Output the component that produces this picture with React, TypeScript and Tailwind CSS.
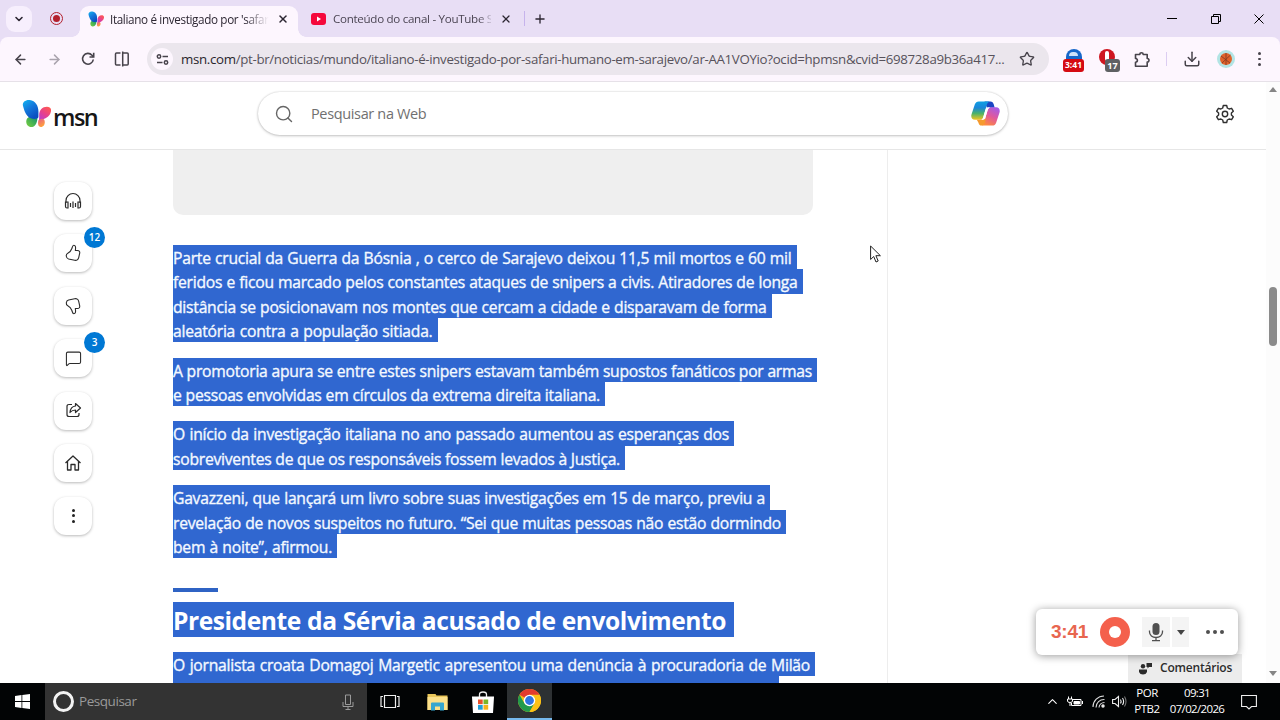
import type { ReactNode } from "react";
import {
  ArrowLeft,
  ArrowRight,
  ChevronDown,
  ChevronUp,
  Download,
  House,
  MessageSquare,
  Plus,
  Search,
  Star,
  X,
} from "lucide-react";

interface Line {
  text: string;
  width: string;
}

const paragraphs: Line[][] = [
  [
    { text: "Parte crucial da Guerra da Bósnia , o cerco de Sarajevo deixou 11,5 mil mortos e 60 mil", width: "w-[618.5px]" },
    { text: "feridos e ficou marcado pelos constantes ataques de snipers a civis. Atiradores de longa", width: "w-[624.5px]" },
    { text: "distância se posicionavam nos montes que cercam a cidade e disparavam de forma", width: "w-[593.5px]" },
    { text: "aleatória contra a população sitiada.", width: "w-[259.5px]" },
  ],
  [
    { text: "A promotoria apura se entre estes snipers estavam também supostos fanáticos por armas", width: "w-[639px]" },
    { text: "e pessoas envolvidas em círculos da extrema direita italiana.", width: "w-[427px]" },
  ],
  [
    { text: "O início da investigação italiana no ano passado aumentou as esperanças dos", width: "w-[556px]" },
    { text: "sobreviventes de que os responsáveis fossem levados à Justiça.", width: "w-[447px]" },
  ],
  [
    { text: "Gavazzeni, que lançará um livro sobre suas investigações em 15 de março, previu a", width: "w-[592px]" },
    { text: "revelação de novos suspeitos no futuro. “Sei que muitas pessoas não estão dormindo", width: "w-[608px]" },
    { text: "bem à noite”, afirmou.", width: "w-[159px]" },
  ],
];

function TextLine({ text, width }: Line) {
  return (
    <div className="flex h-[24.35px]">
      <span className="h-full bg-[#3067d0] pr-[5px]">
        <span
          className={`block leading-[26.5px] tracking-[-0.25px] whitespace-nowrap [-webkit-text-stroke:0.35px_#f4f9ff] [text-align-last:justify] ${width}`}
        >
          {text}
        </span>
      </span>
    </div>
  );
}

function Butterfly({ className, id }: { className: string; id: string }) {
  return (
    <svg className={className} viewBox="0 0 30 30">
      <defs>
        <linearGradient id={`${id}a`} x1="0" y1="0" x2="0.6" y2="1">
          <stop offset="0" stopColor="#12b5f0" />
          <stop offset="0.5" stopColor="#1478dc" />
          <stop offset="1" stopColor="#0b4fc0" />
        </linearGradient>
        <linearGradient id={`${id}b`} x1="0.8" y1="0" x2="0.2" y2="1">
          <stop offset="0" stopColor="#ff5a50" />
          <stop offset="0.45" stopColor="#e8418a" />
          <stop offset="1" stopColor="#b23ae0" />
        </linearGradient>
        <linearGradient id={`${id}c`} x1="0" y1="1" x2="1" y2="0">
          <stop offset="0" stopColor="#7bd13c" />
          <stop offset="1" stopColor="#0d8f70" />
        </linearGradient>
        <linearGradient id={`${id}d`} x1="0" y1="0" x2="0.5" y2="1">
          <stop offset="0" stopColor="#e85a8a" />
          <stop offset="1" stopColor="#ffa33a" />
        </linearGradient>
      </defs>
      <path d="M16 18c-3-.8-8-1-10.500 2-2.500 3.500-.5 8.500 3 9 5 .4 7.500-4 7.500-11z" fill={`url(#${id}c)`} />
      <path d="M1 7C0 3 4 .5 8 1c6 .8 9 6 9 12v6c-1 2-5 2-8 1C4 18 2 11 1 7z" fill={`url(#${id}a)`} />
      <path d="M17.800 18c-.5-6 3-10 8-10 3.500 0 5 2.500 4 5.500-1 4-4.500 6.500-8 7.500L17.500 25z" fill={`url(#${id}b)`} />
      <path d="M17 22c2.500-2 6-2.500 6.500 1 .5 3.500-1.500 6-4 6-3 0-3.300-4-2.500-7z" fill={`url(#${id}d)`} />
    </svg>
  );
}

function CopilotLogo() {
  return (
    <svg className="size-[29px]" viewBox="0 0 30 28">
      <defs>
        <linearGradient id="cpa" x1="0" y1="0" x2="0" y2="1">
          <stop offset="0" stopColor="#0ea0e4" />
          <stop offset="0.35" stopColor="#1c86d8" />
          <stop offset="0.65" stopColor="#49b26a" />
          <stop offset="1" stopColor="#f2c51d" />
        </linearGradient>
        <linearGradient id="cpb" x1="0.8" y1="0" x2="0.3" y2="1">
          <stop offset="0" stopColor="#a45bea" />
          <stop offset="0.5" stopColor="#e0589c" />
          <stop offset="1" stopColor="#ff8a3c" />
        </linearGradient>
      </defs>
      <path d="M14 1.500h6c2 0 3 1.200 3.500 3l1 3.500h-8z" fill="#1b46c4" />
      <path d="M8 1.500h11c-2 1-2.500 3-3.200 5.500L13 17c-.8 2.500-1.500 3.500-4 3.500H4c-3 0-4.300-2.500-3.500-5.500L4 4.500C4.700 2.500 6 1.500 8 1.500z" fill="url(#cpa)" />
      <path d="M22 26.500H11c2-1 2.500-3 3.200-5.500L17 11c.8-2.500 1.500-3.500 4-3.500h5c3 0 4.300 2.500 3.500 5.500l-3.500 10.500c-.7 2-2 3-4 3z" fill="url(#cpb)" />
      <path d="M6 20.500h4c1.500 0 2-.8 2.800-2l2.400 2c-.8 4-1.800 6-4.200 6-2 0-3-1.500-3.500-3.500z" fill="#f59a2e" />
      <path d="M17.700 7.500h2.300c-2 .8-2.600 2.500-3.300 5l-1.700 5.500c-.6 2-1.500 2.700-3.200 2.700h-1.300c1.300-.5 1.800-2 2.300-3.700l2-6.500c.6-2 1.400-3 2.900-3z" fill="#fff" />
    </svg>
  );
}

function SideButton({ children, badge }: { children: ReactNode; badge?: string }) {
  return (
    <div className="relative flex size-[38px] items-center justify-center rounded-[12px] bg-white text-[#2b2b2b] shadow-[0_1px_3px_rgba(0,0,0,0.28)]">
      {children}
      {badge && (
        <span className="absolute -top-[7.500px] left-[30px] flex size-[21px] items-center justify-center rounded-full bg-[#0078d4] text-[10px] font-semibold text-white">
          {badge}
        </span>
      )}
    </div>
  );
}

function ThumbIcon({ className = "" }: { className?: string }) {
  return (
    <svg className={`size-[18px] ${className}`} viewBox="0 0 18 18" fill="none" stroke="currentColor" strokeWidth="1.100" strokeLinejoin="round">
      <path d="M9.800 1.300c1.800 0 2.100 2 1.500 5.200h2.200c1.700 0 2.500 1.200 2.200 2.700l-1 4.500c-.4 2-2 3-4 2.600L4.600 15C3 14.600 2.500 13.800 2.300 12.300c-.2-1.600.2-2.500 1.500-3.100 2.200-1 3.200-2.300 4.100-4.700.5-1.400.6-3.200 1.900-3.200z" />
    </svg>
  );
}

function TitleBar() {
  return (
    <div className="flex h-[37px] bg-[#e8def5] text-[#2c2632]">
      <div className="flex w-[80px] items-center">
        <div className="ml-[6px] flex h-[26px] w-[26px] items-center justify-center rounded-[9px] bg-[#f7effd]">
          <ChevronDown size={12} strokeWidth={3.200} />
        </div>
        <div className="ml-[18px] flex size-[13px] items-center justify-center rounded-full border-[1.500px] border-[#b3202d]">
          <span className="size-[7px] rounded-full bg-[#b3202d]" />
        </div>
      </div>
      <div className="relative mt-[6px] flex h-[31px] w-[218px] items-center rounded-t-[9px] bg-[#fdf6fe] pb-[5px] pl-[8px] before:absolute before:bottom-0 before:-left-[8px] before:size-[8px] before:bg-[radial-gradient(circle_at_0_0,transparent_7.5px,#fdf6fe_8px)] after:absolute after:-right-[8px] after:bottom-0 after:size-[8px] after:bg-[radial-gradient(circle_at_100%_0,transparent_7.5px,#fdf6fe_8px)]">
        <Butterfly id="tab" className="size-[16px] shrink-0" />
        <span className="mt-px ml-[6px] w-[162px] text-[11.700px] tracking-[-0.350px] whitespace-nowrap [mask-image:linear-gradient(to_right,black_83%,transparent_98%)]">
          Italiano é investigado por 'safari
        </span>
        <X size={12} strokeWidth={3} className="ml-[5px] shrink-0" />
      </div>
      <div className="flex flex-1 items-center">
        <svg className="ml-[13px] h-[12px] w-[15px]" viewBox="0 0 15 12">
          <rect width="15" height="12" rx="3" fill="#f5093c" />
          <path d="M6 3.500v5L10 6z" fill="#fff" />
        </svg>
        <span className="mt-px ml-[7px] w-[158px] text-[11.600px] tracking-[-0.300px] whitespace-nowrap text-[#4b4553] [mask-image:linear-gradient(to_right,black_92%,transparent_102%)]">
          Conteúdo do canal - YouTube S
        </span>
        <X size={12} strokeWidth={2.500} className="ml-[9px]" />
        <span className="ml-[12px] h-[15px] w-px bg-[#c6b3ec]" />
        <Plus size={14} strokeWidth={2.300} className="ml-[8px]" />
        <div className="mr-[16px] ml-auto flex items-center gap-[33px]">
          <span className="mr-px h-px w-[10px] bg-black" />
          <svg className="size-[10px]" viewBox="0 0 10 10" fill="none" stroke="#000">
            <path d="M.5 2.500h7v7h-7zM2.500 2.500v-2h7v7h-2" />
          </svg>
          <svg className="size-[10px]" viewBox="0 0 10 10" stroke="#000">
            <path d="M.5.5l9 9M9.500.5l-9 9" />
          </svg>
        </div>
      </div>
    </div>
  );
}

function Toolbar() {
  return (
    <div className="bg-[#e8def5]">
      <div className="flex h-[45px] items-center rounded-t-[8px] border-b border-[#e6e1e8] bg-[#fdf6fe] text-[#47434b]">
        <ArrowLeft size={15} className="ml-[13px]" strokeWidth={2.400} />
        <ArrowRight size={15} className="ml-[19px] text-[#aaa4ae]" strokeWidth={2.400} />
        <svg className="ml-[19px] size-[14px]" viewBox="0 0 14 14" fill="none" stroke="currentColor" strokeWidth="1.600">
          <path d="M12.300 7.500A5.400 5.400 0 1 1 11 3.200L12.500 5" />
          <path d="M12.700.8v4.200H8.500" />
        </svg>
        <svg className="ml-[19px] size-[16px]" viewBox="0 0 16 16" fill="none" stroke="currentColor" strokeWidth="1.500">
          <path d="M6.500 2H2.500Q1.500 2 1.500 3v10q0 1 1 1h4M8.700.5v15M8.700 2h4.500q1 0 1 1v10q0 1-1 1H8.700" />
        </svg>
        <div className="ml-[17px] flex h-[32px] w-[902px] items-center rounded-full bg-[#ebe6ed]">
          <span className="ml-[4px] flex size-[22px] shrink-0 items-center justify-center rounded-full bg-[#fdf6fe]">
            <svg className="size-[13px]" viewBox="0 0 13 13" fill="none" stroke="currentColor" strokeWidth="1.500">
              <circle cx="3" cy="3.500" r="1.700" />
              <path d="M6.500 3.500h5.500M1 9.500h5.500" />
              <circle cx="10" cy="9.500" r="1.700" />
            </svg>
          </span>
          <span className="mt-[2px] ml-[8px] w-[824px] shrink-0 text-[13.300px] tracking-[-0.330px] whitespace-nowrap text-[#57525b]">
            <span className="text-[#29252c]">msn.com</span>/pt-br/noticias/mundo/italiano-é-investigado-por-safari-humano-em-sarajevo/ar-AA1VOYio?ocid=hpmsn&amp;cvid=698728a9b36a417...
          </span>
          <Star size={16} className="ml-[14px]" />
        </div>
        <div className="relative ml-[14px] h-[22px] w-[21px]">
          <div className="mx-auto mt-[1px] flex h-[14px] w-[16px] justify-center rounded-t-full bg-[#1767c9] pt-[3px]">
            <span className="h-[4px] w-[9px] rounded-t-full bg-[#cfe3f8]" />
          </div>
          <span className="absolute top-[11px] left-0 flex h-[13px] w-[21px] items-center justify-center rounded-[3px] bg-[#d50b12] text-[8.500px] font-bold text-white">
            3:41
          </span>
        </div>
        <div className="relative ml-[15px] h-[22px] w-[21px]">
          <div className="mt-px flex size-[16px] items-center justify-center rounded-full bg-[#cf1620]">
            <span className="h-[10px] w-[4px] -translate-y-px rounded-full bg-white" />
          </div>
          <span className="absolute top-[11px] left-[6px] flex h-[13px] w-[15px] items-center justify-center rounded-[3px] bg-[#5e6063] text-[9px] font-bold text-white">
            17
          </span>
        </div>
        <svg className="ml-[14px] size-[17px]" viewBox="0 0 17 17" fill="none" stroke="currentColor" strokeWidth="1.600" strokeLinejoin="round">
          <path d="M1.500 3.500h4.300a1.700 1.700 0 0 1 3.400 0h4v4a1.700 1.700 0 0 1 0 3.600v4.100H1.500v-4a1.900 1.900 0 0 0 0-3.800z" />
        </svg>
        <span className="ml-[15px] h-[14px] w-px bg-[#dccdf2]" />
        <Download size={18} className="ml-[16px]" />
        <svg className="ml-[16px] size-[18px]" viewBox="0 0 18 18">
          <circle cx="9" cy="9" r="9" fill="#b2e4e4" />
          <circle cx="9" cy="9" r="6" fill="#e0622b" />
          <path d="M4 6l9 7M13.500 5L5 13M9 3v12" stroke="#873d25" strokeWidth=".9" />
        </svg>
        <span className="ml-[23px] flex flex-col gap-[3px]">
          <i className="size-[2.500px] rounded-full bg-[#47434b]" />
          <i className="size-[2.500px] rounded-full bg-[#47434b]" />
          <i className="size-[2.500px] rounded-full bg-[#47434b]" />
        </span>
      </div>
    </div>
  );
}

function MsnHeader() {
  return (
    <div className="flex h-[68px] w-[1266px] shrink-0 items-center border-b border-[#e6e6e6] bg-white pb-[4px]">
      <Butterfly id="msn" className="mb-[1px] ml-[22px] size-[29px]" />
      <span className="mt-[8px] ml-[2px] w-[44px] text-[23.500px] leading-none font-semibold tracking-[-1.500px] text-[#161616]">msn</span>
      <div className="ml-[161px] flex h-[43px] w-[750px] items-center rounded-full bg-white pr-[8px] pl-[16px] shadow-[0_0_2px_rgba(0,0,0,0.18),0_1px_3px_rgba(0,0,0,0.2)]">
        <Search size={20} strokeWidth={1.700} className="text-[#666]" />
        <span className="ml-[17px] text-[14.500px] tracking-[-0.350px] text-[#707070]">Pesquisar na Web</span>
        <span className="ml-auto">
          <CopilotLogo />
        </span>
      </div>
      <svg className="ml-[207px] size-[20px]" viewBox="0 0 20 20" fill="none" stroke="#303030" strokeWidth="1.400" strokeLinejoin="round">
        <path d="M8.300 1.500h3.400l.6 2.500 1.800 1 2.500-.7 1.700 2.900-1.900 1.800v2l1.900 1.800-1.700 2.900-2.500-.7-1.800 1-.6 2.500H8.300L7.700 16l-1.800-1-2.500.7-1.700-2.900L3.600 11V9L1.700 7.200l1.700-2.900 2.500.7 1.800-1z" />
        <circle cx="10" cy="10" r="2.700" />
      </svg>
    </div>
  );
}

function Article() {
  return (
    <div className="ml-[80px] w-[715px] shrink-0 border-r border-[#ededed]">
      <div className="h-[64.500px] w-[640px] rounded-b-[10px] bg-[#efefef]" />
      <div className="mt-[30.500px] flex flex-col gap-[15.200px] text-[15.700px] font-medium text-[#f4f9ff]">
        {paragraphs.map((lines, i) => (
          <div key={i}>
            {lines.map((line) => (
              <TextLine key={line.text} {...line} />
            ))}
          </div>
        ))}
      </div>
      <div className="mt-[29.500px] h-[4px] w-[45px] bg-[#2f63c4]" />
      <div className="mt-[10px] flex h-[35px]">
        <span className="bg-[#3067d0] pr-[8px]">
          <h2 className="w-[553px] text-[24.600px] leading-[37px] font-bold tracking-[-0.450px] whitespace-nowrap text-white [text-align-last:justify]">
            Presidente da Sérvia acusado de envolvimento
          </h2>
        </span>
      </div>
      <div className="mt-[15px] text-[15.700px] font-medium text-[#f4f9ff]">
        <TextLine text="O jornalista croata Domagoj Margetic apresentou uma denúncia à procuradoria de Milão" width="w-[637px]" />
        <div className="h-[10px] w-[606px] bg-[#3067d0]" />
      </div>
    </div>
  );
}

function RecorderPanel() {
  return (
    <div className="absolute top-[609px] left-[1036px] flex h-[46px] w-[202px] items-center rounded-[6px] bg-white shadow-[0_1px_8px_rgba(0,0,0,0.4)]">
      <span className="ml-[15px] w-[38px] font-['Liberation_Sans'] text-[19px] font-bold tracking-[-0.200px] text-[#e8664f]">3:41</span>
      <span className="ml-[11px] flex size-[30px] items-center justify-center rounded-full bg-[#f4604c]">
        <i className="size-[12px] rounded-full bg-white" />
      </span>
      <span className="ml-[12px] flex h-[30px] w-[28px] items-center justify-center bg-[#f4f4f4]">
        <svg className="h-[20px] w-[16px]" viewBox="0 0 16 20">
          <rect x="4.500" y="1" width="7" height="12" rx="3.500" fill="#505050" />
          <path d="M1.500 8.500v1.500a6.500 5.500 0 0 0 13 0V8.500M8 15.500v3M4 18.700h8" fill="none" stroke="#505050" strokeWidth="1.300" />
        </svg>
      </span>
      <span className="ml-[2px] flex h-[30px] w-[17px] items-center justify-center bg-[#f4f4f4]">
        <svg className="h-[5px] w-[8px]" viewBox="0 0 8 5">
          <path d="M0 0h8L4 5z" fill="#444" />
        </svg>
      </span>
      <span className="ml-[17px] flex gap-[3px]">
        <i className="size-[4px] rounded-full bg-[#505050]" />
        <i className="size-[4px] rounded-full bg-[#505050]" />
        <i className="size-[4px] rounded-full bg-[#505050]" />
      </span>
    </div>
  );
}

function ChromeLogo() {
  return (
    <svg className="size-[23px]" viewBox="0 0 24 24">
      <circle cx="12" cy="12" r="12" fill="#fbc116" />
      <path d="M12 12L1.600 6A12 12 0 0 1 22.400 6z" fill="#e33b2e" />
      <path d="M1.600 6A12 12 0 0 0 12 24l5.200-9L12 12 6.800 15z" fill="#229a4b" />
      <path d="M12 6h10.400A12 12 0 0 1 12 24l5.200-9z" fill="#fbc116" />
      <circle cx="12" cy="12" r="6" fill="#fff" />
      <circle cx="12" cy="12" r="4.600" fill="#2f74e0" />
    </svg>
  );
}

function Taskbar() {
  return (
    <div className="flex h-[37px] shrink-0 bg-[#020405] text-white">
      <div className="flex w-[45px] items-center justify-center">
        <svg className="size-[15px]" viewBox="0 0 15 15" fill="#fff">
          <path d="M0 2l6.500-.9v6H0zM7.300 1L15 0v7.100H7.300zM0 7.900h6.500v6L0 13zM7.300 7.900H15V15l-7.700-1z" />
        </svg>
      </div>
      <div className="flex w-[322px] items-center bg-[#333]">
        <span className="ml-[8px] size-[21px] rounded-full border-[3px] border-[#f3f3f3]" />
        <span className="ml-[5px] text-[13.500px] tracking-[-0.450px] text-[#9a9a9a]">Pesquisar</span>
        <svg className="mr-[13px] ml-auto h-[16px] w-[12px]" viewBox="0 0 12 16" fill="none" stroke="#9a9a9a">
          <path d="M3.500 1h5v9.500h-5zM1 8v4.500h10V8M6 12.500v3M3.500 15.500h5" />
        </svg>
      </div>
      <div className="flex w-[46px] items-center justify-center">
        <svg className="h-[15px] w-[20px]" viewBox="0 0 20 15" fill="none" stroke="#eee" strokeWidth="1.200">
          <path d="M4.500 1.500h11v12h-11zM3 2.500H1v10h2M17 2.500h2v10h-2" />
        </svg>
      </div>
      <div className="flex w-[48px] items-center justify-center">
        <svg className="h-[18px] w-[21px]" viewBox="0 0 21 18">
          <path d="M.5 1h8l1 1.500h11V17H.5z" fill="#e9c659" />
          <path d="M.5 4h20v13H.5z" fill="#fbe08a" />
          <path d="M4 17.500v-7q0-1 1-1h11q1 0 1 1v7h-4v-4H8v4z" fill="#35a6d0" />
        </svg>
      </div>
      <div className="flex w-[46px] items-center pl-[11px]">
        <svg className="h-[22px] w-[22px]" viewBox="0 0 22 22">
          <path d="M7.500 6V3.500Q7.500 1 11 1t3.500 2.500V6" fill="none" stroke="#eee" strokeWidth="1.300" />
          <path d="M0 5.500h22L21 22H1z" fill="#fff" />
          <path d="M6 8.500h4.700v4.700H6z" fill="#e8502a" />
          <path d="M11.500 8.500h4.700v4.700h-4.700z" fill="#79b528" />
          <path d="M6 14h4.700v4.700H6z" fill="#1f9ed8" />
          <path d="M11.500 14h4.700v4.700h-4.700z" fill="#f6b31c" />
        </svg>
      </div>
      <div className="flex w-[45px] items-center justify-center border-b-2 border-[#76b9ed] bg-[#2d3133]">
        <ChromeLogo />
      </div>
      <div className="ml-auto flex items-center">
        <ChevronUp size={15} strokeWidth={1.700} />
        <svg className="ml-[7px] h-[12px] w-[16px]" viewBox="0 0 16 12" fill="none" stroke="#fff">
          <path d="M5.500 3.500H14v6H4.500V7M15.500 5v3M1.500.5V3M4.500.5V3M.5 3h5v2q0 1.500-2.500 1.500T.5 5zM3 6.500V10" />
          <path d="M7 5.500h5.500v2.500H7z" fill="#fff" />
        </svg>
        <svg className="ml-[9px] size-[13px]" viewBox="0 0 13 13" fill="none" stroke="#ddd" strokeWidth="1.100">
          <path d="M1 12A11 11 0 0 1 12 1M4 12.500A8 8 0 0 1 12.500 4.500M7 12.500a5.500 5.500 0 0 1 5.500-5" />
          <circle cx="11" cy="11" r="1.200" fill="#fff" />
        </svg>
        <svg className="ml-[7px] h-[13px] w-[15px]" viewBox="0 0 15 13" fill="none" stroke="#eee" strokeWidth="1.100">
          <path d="M.6 4.500h2.400l3.500-3v10L3 8.500H.6zM8.500 4.500q1.200 2 0 4M10.500 3q2.200 3.500 0 7" />
          <path d="M12.500 1.500q3 5 0 10" stroke="#777" />
        </svg>
        <div className="mb-px ml-[7px] w-[26px] text-center text-[11.500px] leading-[16px] tracking-[-0.500px]">
          <div>POR</div>
          <div>PTB2</div>
        </div>
        <div className="mb-px ml-[8px] w-[58px] text-center text-[11.500px] leading-[16px] tracking-[-0.650px] whitespace-nowrap">
          <div>09:31</div>
          <div>07/02/2026</div>
        </div>
        <svg className="mr-[23px] ml-[15px] size-[16px]" viewBox="0 0 16 16" fill="none" stroke="#eee" strokeWidth="1.100">
          <path d="M.6 1.500h14.800v11H10.500L8 15l-2.500-2.500H.6z" />
        </svg>
      </div>
    </div>
  );
}

export default function App() {
  return (
    <div className="relative flex h-[720px] w-[1280px] flex-col overflow-hidden bg-white font-['Open_Sans',sans-serif]">
      <TitleBar />
      <Toolbar />
      <div className="flex h-[601px] overflow-hidden">
        <div className="flex w-[1266px] flex-col">
          <MsnHeader />
          <div className="flex h-[533px] overflow-hidden">
            <div className="ml-[54px] flex w-[39px] shrink-0 flex-col gap-[14.500px] pt-[31.500px]">
              <SideButton>
                <svg className="size-[18px]" viewBox="0 0 18 18" fill="none" stroke="currentColor" strokeWidth="1.200">
                  <path d="M2 11V8.500a7 7 0 0 1 14 0V11M2 10h2v6H3q-1.500 0-1.500-1.500V10zM16 10h-2v6h1q1.500 0 1.500-1.500V10zM6.500 11v4M9 9.500V16M11.500 11v4" />
                </svg>
              </SideButton>
              <SideButton badge="12">
                <ThumbIcon />
              </SideButton>
              <SideButton>
                <ThumbIcon className="-scale-y-100" />
              </SideButton>
              <SideButton badge="3">
                <MessageSquare size={17} strokeWidth={1.500} />
              </SideButton>
              <SideButton>
                <svg className="size-[17px]" viewBox="0 0 17 17" fill="none" stroke="currentColor" strokeWidth="1.200" strokeLinejoin="round">
                  <path d="M7 2.500H4Q2 2.500 2 4.500v8q0 2 2 2h8q2 0 2-2V11" />
                  <path d="M10.500 1.500L15.500 6l-5 4.500V8Q7 8 5 10.500 5.500 4.500 10.500 4z" />
                </svg>
              </SideButton>
              <SideButton>
                <svg className="size-[18px]" viewBox="0 0 18 18" fill="none" stroke="currentColor" strokeWidth="1.300" strokeLinejoin="round">
                  <path d="M1.500 9L9 2l7.500 7M3.500 7.500V16H7v-5.500h4V16h3.500V7.500" />
                </svg>
              </SideButton>
              <SideButton>
                <span className="flex flex-col gap-[2.500px]">
                  <i className="size-[3px] rounded-full bg-[#222]" />
                  <i className="size-[3px] rounded-full bg-[#222]" />
                  <i className="size-[3px] rounded-full bg-[#222]" />
                </span>
              </SideButton>
            </div>
            <Article />
            <div className="mt-auto mr-[24px] ml-auto flex h-[29px] w-[114px] items-center bg-[#ececec] pb-[1px] text-[#2c2c2c]">
              <svg className="ml-[11px] size-[13px]" viewBox="0 0 13 13" fill="currentColor">
                <circle cx="4" cy="4.300" r="2.200" />
                <path d="M0 7.500h8V10q-1 2.500-4 2.500T0 10zM7.500 1H13v4h-3L8.500 6.500V5h-1z" />
              </svg>
              <span className="ml-[8px] text-[12px] font-semibold tracking-[-0.200px]">Comentários</span>
            </div>
          </div>
        </div>
        <div className="flex w-[14px] flex-col items-center bg-[#fcfcfc] pt-[5px] pb-[7px]">
          <svg className="h-[5px] w-[8px]" viewBox="0 0 8 5">
            <path d="M0 5h8L4 0z" fill="#858585" />
          </svg>
          <span className="mt-[195px] h-[59px] w-[8px] rounded-full bg-[#8b8b8b]" />
          <svg className="mt-auto h-[5px] w-[8px]" viewBox="0 0 8 5">
            <path d="M0 0h8L4 5z" fill="#858585" />
          </svg>
        </div>
      </div>
      <Taskbar />
      <RecorderPanel />
      <svg className="absolute top-[245px] left-[870px] h-[18px] w-[12px]" viewBox="0 0 12 18">
        <path d="M.6 1v13.500l3.100-3 2.300 5.500 2.200-1-2.300-5.300h4.500z" fill="#fff" stroke="#222" strokeWidth="1" />
      </svg>
    </div>
  );
}
